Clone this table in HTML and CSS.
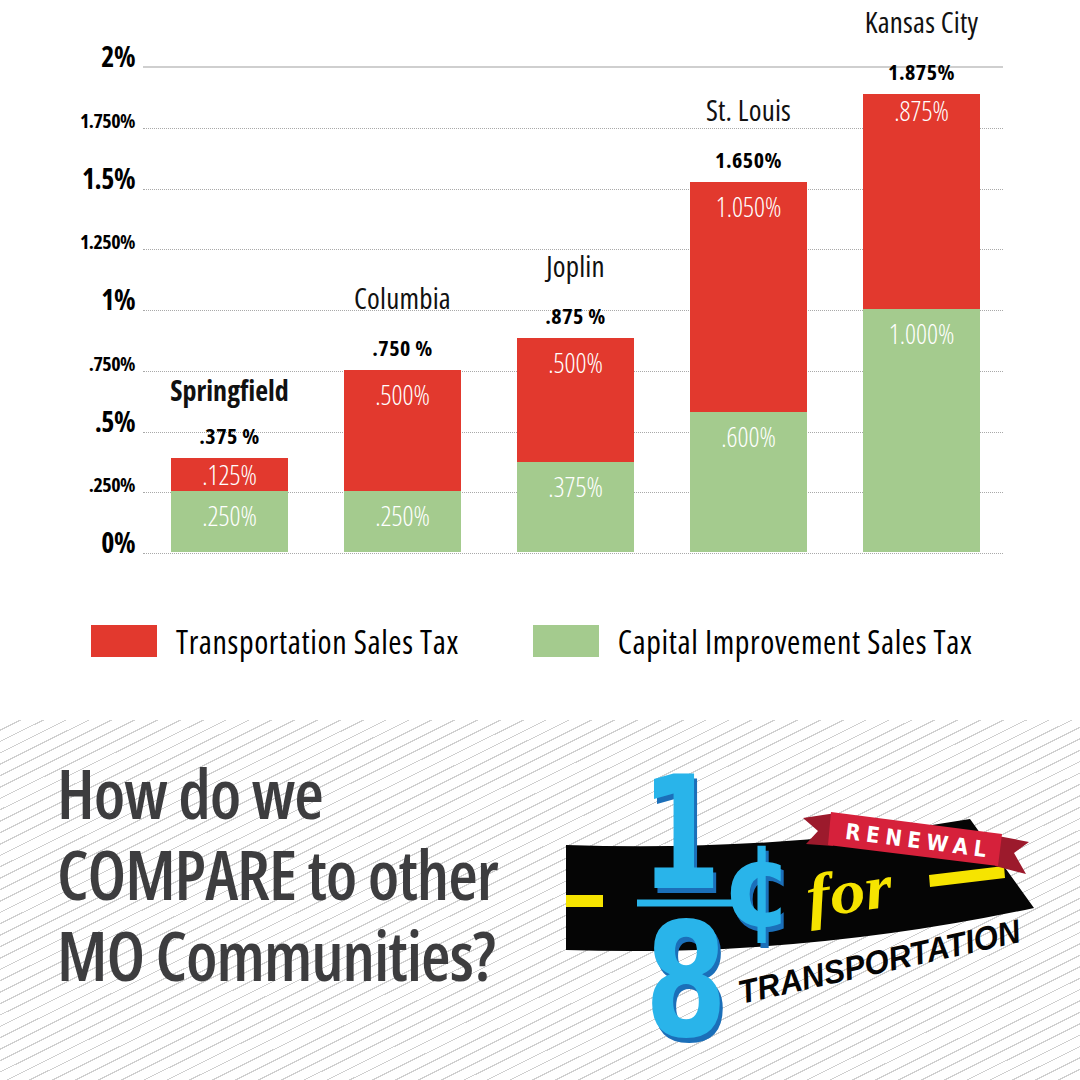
FILE: index.html
```html
<!DOCTYPE html>
<html lang="en">
<head>
<meta charset="utf-8">
<title>How do we compare to other MO communities?</title>
<link rel="stylesheet" href="styles.css">
</head>
<body>
<main class="page">
  <section class="chart">
    <div class="axis">
      <div class="tick tick--major"><span>2%</span></div>
      <div class="tick"><span>1.750%</span></div>
      <div class="tick tick--major"><span>1.5%</span></div>
      <div class="tick"><span>1.250%</span></div>
      <div class="tick tick--major"><span>1%</span></div>
      <div class="tick"><span>.750%</span></div>
      <div class="tick tick--major"><span>.5%</span></div>
      <div class="tick"><span>.250%</span></div>
      <div class="tick tick--major"><span>0%</span></div>
    </div>
    <div class="plot">
      <div class="gridlines">
        <div class="gl gl--solid"></div>
        <div class="gl"></div>
        <div class="gl"></div>
        <div class="gl"></div>
        <div class="gl"></div>
        <div class="gl"></div>
        <div class="gl"></div>
        <div class="gl"></div>
        <div class="gl"></div>
      </div>
      <div class="bars">
        <div class="col">
          <div class="city city--strong">Springfield</div>
          <div class="total">.375 %</div>
          <div class="bar">
            <div class="seg seg--red seg--tight" style="height:33px">.125%</div>
            <div class="seg seg--green" style="height:61px">.250%</div>
          </div>
        </div>
        <div class="col">
          <div class="city">Columbia</div>
          <div class="total">.750 %</div>
          <div class="bar">
            <div class="seg seg--red" style="height:121px">.500%</div>
            <div class="seg seg--green" style="height:61px">.250%</div>
          </div>
        </div>
        <div class="col">
          <div class="city">Joplin</div>
          <div class="total">.875 %</div>
          <div class="bar">
            <div class="seg seg--red" style="height:124px">.500%</div>
            <div class="seg seg--green" style="height:90px">.375%</div>
          </div>
        </div>
        <div class="col">
          <div class="city">St. Louis</div>
          <div class="total">1.650%</div>
          <div class="bar">
            <div class="seg seg--red" style="height:230px">1.050%</div>
            <div class="seg seg--green" style="height:140px">.600%</div>
          </div>
        </div>
        <div class="col">
          <div class="city">Kansas City</div>
          <div class="total">1.875%</div>
          <div class="bar">
            <div class="seg seg--red seg--tight" style="height:215px">.875%</div>
            <div class="seg seg--green" style="height:243px">1.000%</div>
          </div>
        </div>
      </div>
    </div>
  </section>

  <section class="legend">
    <div class="legend-item"><span class="swatch swatch--red"></span><span>Transportation Sales Tax</span></div>
    <div class="legend-item"><span class="swatch swatch--green"></span><span>Capital Improvement Sales Tax</span></div>
  </section>

  <section class="promo">
    <h1 class="headline">How do we<br>COMPARE to other<br>MO Communities?</h1>
    <svg class="logo" viewBox="560 720 520 360" width="520" height="360" aria-label="1/8 cent for Transportation renewal">
      <path d="M566,845 Q780,852 970,819 L1034,908 Q800,958 566,950 Z" fill="#050505"/>
      <polygon points="566,895 603,895 603,907 566,907" fill="#f6e400"/>
      <polygon points="929,875 1004,866 1005,878 930,887" fill="#f6e400"/>
      <polygon points="803,818 836,813 833,846 806,844 818,831" fill="#9c1a2c"/>
      <polygon points="998,836 1029,842 1014,853 1026,874 995,866" fill="#9c1a2c"/>
      <polygon points="831,812 1002,834 998,866 828,845" fill="#d6213b"/>
      <text class="renewal" x="916" y="848" text-anchor="middle" textLength="142" lengthAdjust="spacing" transform="rotate(7.5 916 840)">RENEWAL</text>
      <line x1="637" y1="903" x2="734" y2="903" stroke="#29b4ea" stroke-width="7"/>
      <g class="digits">
        <text class="digit-shadow" x="644" y="893" textLength="80" lengthAdjust="spacingAndGlyphs" font-size="156">1</text>
        <text class="digit-face" x="641" y="888" textLength="80" lengthAdjust="spacingAndGlyphs" font-size="156">1</text>
        <text class="digit-shadow" x="648" y="1041" textLength="82" lengthAdjust="spacingAndGlyphs" font-size="159">8</text>
        <text class="digit-face" x="645" y="1036" textLength="82" lengthAdjust="spacingAndGlyphs" font-size="159">8</text>
        <text class="digit-shadow" x="725" y="931" textLength="72" lengthAdjust="spacingAndGlyphs" font-size="114">¢</text>
        <text class="digit-face" x="722" y="926" textLength="72" lengthAdjust="spacingAndGlyphs" font-size="114">¢</text>
      </g>
      <text class="for" x="806" y="912" textLength="86" lengthAdjust="spacingAndGlyphs" transform="rotate(-8 850 890)">for</text>
      <text class="transport" x="741" y="1004" textLength="288" lengthAdjust="spacingAndGlyphs" transform="rotate(-12.5 741 1004)">TRANSPORTATION</text>
    </svg>
  </section>
</main>
</body>
</html>
```

FILE: styles.css
```css
* { box-sizing: border-box; }

html, body {
  margin: 0;
  padding: 0;
  background: #ffffff;
}

.page {
  width: 1080px;
  height: 1080px;
  overflow: hidden;
  font-family: "Open Sans", "DejaVu Sans", sans-serif;
  font-stretch: 75%;
  color: #000;
  display: flex;
  flex-direction: column;
}

/* ---------- chart ---------- */
.chart {
  display: grid;
  grid-template-columns: 135px 860px;
  column-gap: 8px;
  height: 556px;
  flex: none;
}

.axis {
  display: flex;
  flex-direction: column;
  gap: 30.75px;
  padding-top: 40px;
}

.tick {
  height: 30px;
  display: flex;
  justify-content: flex-end;
  align-items: flex-end;
  font-weight: 700;
  font-size: 20px;
  letter-spacing: -0.5px;
}

.tick span { line-height: 1; }

.tick--major { font-size: 28px; letter-spacing: -0.5px; }

.plot {
  display: grid;
  grid-template-columns: 1fr;
  grid-template-rows: 556px;
}

.gridlines, .bars { grid-area: 1 / 1; }

.gridlines {
  display: flex;
  flex-direction: column;
  gap: 59.75px;
  padding-top: 66px;
}

.gl {
  height: 1px;
  border-top: 1px dotted #a9a9a9;
}

.gl--solid {
  height: 2px;
  border-top: 2px solid #cfcfcf;
}

.bars {
  height: 552px;
  display: flex;
  align-items: flex-end;
  gap: 56px;
  padding-left: 28px;
}

.col {
  width: 117px;
  display: flex;
  flex-direction: column;
  align-items: center;
}

.city {
  font-size: 29px;
  line-height: 30px;
  font-weight: 400;
  letter-spacing: 0.2px;
  white-space: nowrap;
  margin-bottom: 22px;
  color: #111;
}

.city--strong {
  font-weight: 700;
  font-size: 28px;
  letter-spacing: 0;
  margin-bottom: 18px;
}

.total {
  font-size: 22px;
  line-height: 24px;
  font-weight: 700;
  letter-spacing: 0.5px;
  white-space: nowrap;
  margin-bottom: 11px;
}

.bar {
  width: 117px;
  display: flex;
  flex-direction: column;
}

.seg {
  color: #fff;
  font-size: 27px;
  font-weight: 300;
  line-height: 28px;
  text-align: center;
  padding-top: 11px;
  white-space: nowrap;
}

.seg--tight { padding-top: 3px; }

.seg--red { background: #e2392e; }
.seg--green { background: #a4cb8e; }

/* ---------- legend ---------- */
.legend {
  display: flex;
  align-items: center;
  gap: 74px;
  padding-left: 91px;
  margin-top: 69px;
  height: 32px;
  flex: none;
}

.legend-item {
  display: flex;
  align-items: center;
  gap: 19px;
  font-size: 32px;
  font-weight: 400;
  letter-spacing: 0.6px;
  white-space: nowrap;
}

.swatch {
  width: 66px;
  height: 32px;
  display: block;
}

.swatch--red { background: #e2392e; }
.swatch--green { background: #a4cb8e; }

/* ---------- promo ---------- */
.promo {
  margin-top: 63px;
  flex: 1;
  display: flex;
  align-items: flex-start;
  padding-left: 57px;
  background: repeating-linear-gradient(-26.5deg, #ffffff 0 9px, #d0d0d0 9px 10.2px);
}

.headline {
  margin: 32px 0 0;
  width: 503px;
  flex: none;
  font-size: 68px;
  line-height: 81px;
  font-weight: 600;
  color: #3d3d3f;
  letter-spacing: -1px;
}

.logo {
  display: block;
  flex: none;
}

.renewal {
  font-family: "DejaVu Sans", sans-serif;
  font-weight: 700;
  font-size: 22px;
  fill: #ffffff;
}

.digits text {
  font-family: "DejaVu Sans", sans-serif;
  font-weight: 700;
}

.digit-shadow { fill: #1b6fb9; }
.digit-face { fill: #29b4ea; }

.for {
  font-family: "Liberation Serif", serif;
  font-style: italic;
  font-weight: 700;
  font-size: 62px;
  fill: #f6e400;
}

.transport {
  font-family: "Liberation Sans", sans-serif;
  font-style: italic;
  font-weight: 700;
  font-size: 33px;
  fill: #050505;
}
```
